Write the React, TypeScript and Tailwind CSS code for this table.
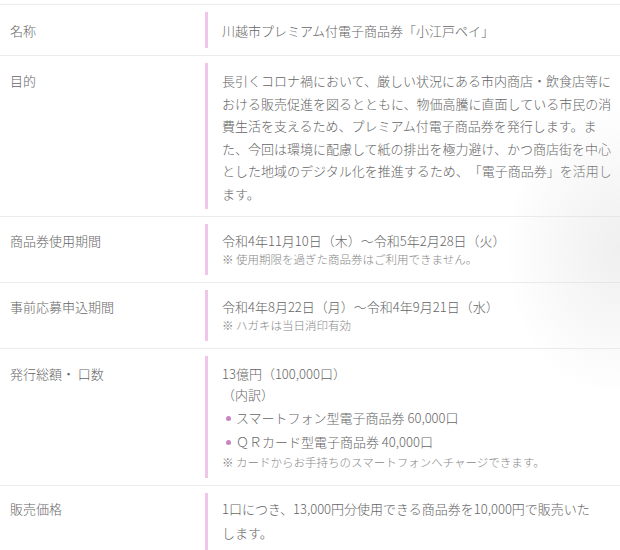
const font = { fontFamily: '"Noto Sans CJK JP", "Noto Sans", sans-serif' };

interface RowProps {
  label: string;
  pad: string; // top/bottom padding of the pink-bar column, full class names
  lead: string; // leading of the first line, so the label lines up
  children: React.ReactNode;
}

const Row = ({ label, pad, lead, children }: RowProps) => {
  return (
    <div className="flex border-b border-[#ececec] py-[7px]">
      <div className={`w-[205px] shrink-0 pl-[10px] ${pad} ${lead} text-[13px] font-light text-[#666]`}>
        {label}
      </div>
      <div
        className={`flex-1 border-l-[3px] border-[#efc6e9] pl-[14px] pr-[6px] ${pad} text-[13px] font-light text-[#666] [text-spacing-trim:space-all]`}
      >
        {children}
      </div>
    </div>
  );
};

const Note = ({ children }: { children: React.ReactNode }) => (
  <p className="text-[11.5px] leading-[16px] text-[#888]">{children}</p>
);

const Bullet = ({ children }: { children: React.ReactNode }) => (
  <li className="flex items-center leading-[24px]">
    <span className="ml-[4px] mr-[5px] h-[5px] w-[5px] rounded-full bg-[#c985c2]" />
    <span>{children}</span>
  </li>
);

export default function App() {
  return (
    <div className="relative h-[550px] w-[620px] overflow-hidden bg-white" style={font}>
      <div className="mt-[4px] border-t border-[#ececec]">
        <Row label="名称" pad="pt-[7px] pb-[6px]" lead="leading-[23px]">
          <p className="leading-[23px]">川越市プレミアム付電子商品券「小江戸ペイ」</p>
        </Row>

        <Row label="目的" pad="pt-[7px] pb-[4px]" lead="leading-[22.5px]">
          <p className="leading-[22.5px]">
            長引くコロナ禍において、厳しい状況にある市内商店・飲食店等における販売促進を図るとともに、物価高騰に直面している市民の消費生活を支えるため、プレミアム付電子商品券を発行します。また、今回は環境に配慮して紙の排出を極力避け、かつ商店街を中心とした地域のデジタル化を推進するため、「電子商品券」を活用します。
          </p>
        </Row>

        <Row label="商品券使用期間" pad="pt-[7px] pb-[8px]" lead="leading-[20px]">
          <p className="leading-[20px]">令和4年11月10日（木）～令和5年2月28日（火）</p>
          <Note>※ 使用期限を過ぎた商品券はご利用できません。</Note>
        </Row>

        <Row label="事前応募申込期間" pad="pt-[7px] pb-[8px]" lead="leading-[20px]">
          <p className="leading-[20px]">令和4年8月22日（月）～令和4年9月21日（水）</p>
          <Note>※ ハガキは当日消印有効</Note>
        </Row>

        <Row label="発行総額・ 口数" pad="pt-[8px] pb-[8px]" lead="leading-[20px]">
          <p className="leading-[20px]">13億円（100,000口）</p>
          <p className="leading-[22px]">（内訳）</p>
          <ul>
            <Bullet>スマートフォン型電子商品券 60,000口</Bullet>
            <Bullet>ＱＲカード型電子商品券 40,000口</Bullet>
          </ul>
          <Note>※ カードからお手持ちのスマートフォンへチャージできます。</Note>
        </Row>

        <Row label="販売価格" pad="pt-[4px] pb-[8px]" lead="leading-[24px]">
          <p className="leading-[24px]">
            1口につき、13,000円分使用できる商品券を10,000円で販売いた
            <br />
            します。
          </p>
        </Row>
      </div>

      {/* soft shading on the right edge of the photo */}
      <div className="pointer-events-none absolute right-0 top-[110px] h-[280px] w-[110px] bg-[radial-gradient(ellipse_at_right,_rgba(215,215,215,0.4)_0%,_rgba(255,255,255,0)_75%)]" />
    </div>
  );
}
